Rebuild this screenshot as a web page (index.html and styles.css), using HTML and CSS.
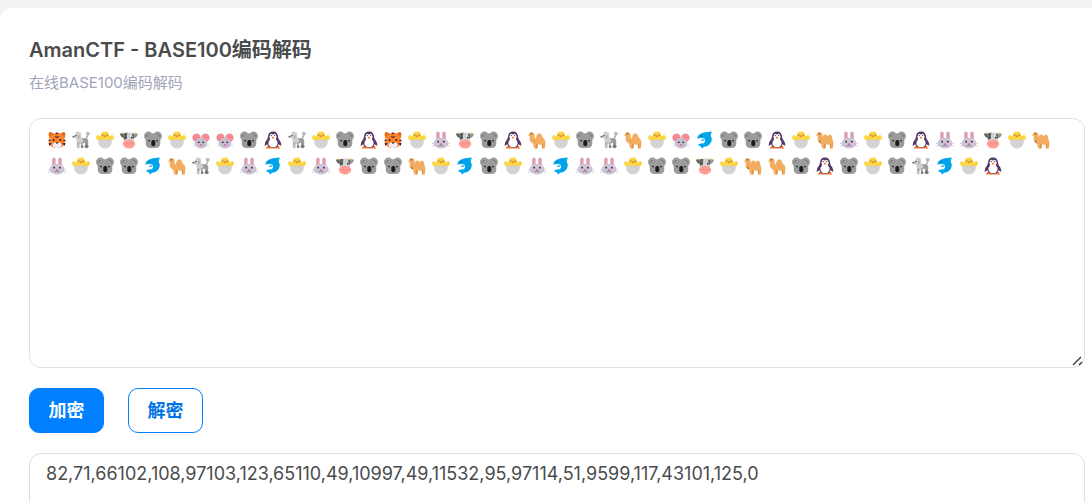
FILE: index.html
```html
<!DOCTYPE html>
<html lang="zh-CN">
<head>
  <meta charset="UTF-8" />
  <title>AmanCTF - BASE100编码解码</title>
  <link rel="stylesheet" href="styles.css">
</head>
<body>

<svg class="sprites" aria-hidden="true">
  <symbol id="tiger" viewBox="0 0 32 32">
    <path fill="#e56b16" d="M1 5q0-4 5-3l6 4-8 9Q1 10 1 5zM31 5q0-4-5-3l-6 4 8 9q3-5 3-10z"/>
    <path fill="#ff822d" d="M16 3c9 0 13 7 14 15 0 8-5 12-14 12S2 26 2 18C3 10 7 3 16 3z"/>
    <path fill="#f4eaf8" d="M16 20q5-1 8 3 1 7-8 7t-8-7q3-4 8-3z"/>
    <path fill="#321b41" d="M13 3h6l-3 3zM12 9l4 1 4-1-2 3h-4zM1 15l5 2-5 1zM31 15l-5 2 5 1zM1 21l6 1-5 4zM31 21l-6 1 5 4z"/>
    <circle cx="10" cy="16" r="1.6" fill="#1c1c1c"/>
    <circle cx="22" cy="16" r="1.6" fill="#1c1c1c"/>
    <path fill="#1c1c1c" d="M13 20h6l-3 3z"/>
  </symbol>
  <symbol id="poodle" viewBox="0 0 32 32">
    <path fill="none" stroke="#9b9b9b" stroke-width="2" d="M25 15l3-8"/>
    <circle cx="28" cy="5" r="3.5" fill="#bdbdbd"/>
    <path fill="#9b9b9b" d="M14 13h12q4 3 3 8l-1 5h-4l-1-5-8 2z"/>
    <path fill="#b4b4b4" d="M1 9l7-3 5 3-3 4-8-1z"/>
    <path fill="#cfcfcf" d="M6 5q1-5 5-4 5 0 5 5l1 7q4 2 3 7-2 4-7 4-5-1-5-7z"/>
    <path fill="#b4b4b4" d="M10 6q5 0 4 6l-3 2z"/>
    <path fill="#a5a5a5" d="M9 21h4v7H9zM16 20h3v8h-3z"/>
    <circle cx="11" cy="28" r="3" fill="#c8c8c8"/>
    <circle cx="18" cy="28" r="2.5" fill="#858585"/>
    <circle cx="26" cy="27" r="3.5" fill="#7b7b7b"/>
    <circle cx="7" cy="8" r="1" fill="#1c1c1c"/>
    <circle cx="2" cy="10" r="1" fill="#1c1c1c"/>
  </symbol>
  <symbol id="chick" viewBox="0 0 32 32">
    <path fill="#fcd53f" d="M8 9q1-8 8-8t8 8q2 1 4-2 3 0 4 4-1 6-8 7H8q-7-1-8-7 1-4 4-4 2 3 4 2z"/>
    <path fill="#d3d3d3" d="M4 16l4-2 4 3 4-3 4 3 4-3 4 2q1 7-3 11-4 4-9 4t-9-4q-4-4-3-11z"/>
    <circle cx="12" cy="7" r="1" fill="#321b41"/>
    <circle cx="20" cy="7" r="1" fill="#321b41"/>
    <path fill="#f8782a" d="M13 9q3-3 6 0l-3 2z"/>
  </symbol>
  <symbol id="cow" viewBox="0 0 32 32">
    <path fill="#636363" d="M0 5q4-2 9 1l-1 7Q1 12 0 5z"/>
    <path fill="#9b9b9b" d="M32 5q-4-2-9 1l1 7q7-1 8-8z"/>
    <path fill="#f9c23c" d="M4 1q1 4 7 3l-1 4Q4 7 4 1zM28 1q-1 4-7 3l1 4q6-1 6-7z"/>
    <path fill="#d3d3d3" d="M7 4q9-3 18 0 1 8-1 16H8Q6 12 7 4z"/>
    <path fill="#636363" d="M7 4q4-1 6-1 0 6-2 9-1 4-4 4-1-5 0-12zM22 4l3 1q1 5 0 9-4-2-3-10z"/>
    <path fill="#ff9c94" d="M9 17q7-3 14 0 5 3 4 7-3 7-11 7T5 24q-1-4 4-7z"/>
    <circle cx="11" cy="12" r="1.5" fill="#1c1c1c"/>
    <circle cx="21" cy="12" r="1.5" fill="#1c1c1c"/>
    <circle cx="12" cy="22" r="1" fill="#e8686c"/>
    <circle cx="20" cy="22" r="1" fill="#e8686c"/>
  </symbol>
  <symbol id="koala" viewBox="0 0 32 32">
    <circle cx="8" cy="9" r="8" fill="#9b9b9b"/>
    <circle cx="24" cy="9" r="8" fill="#9b9b9b"/>
    <circle cx="7" cy="9" r="4" fill="#858585"/>
    <circle cx="25" cy="9" r="4" fill="#858585"/>
    <path fill="#9b9b9b" d="M16 4q11 0 13 12v7q-1 7-8 7H11q-7 0-8-7v-7Q5 4 16 4z"/>
    <circle cx="9" cy="17" r="1.5" fill="#1c1c1c"/>
    <circle cx="23" cy="17" r="1.5" fill="#1c1c1c"/>
    <rect x="13" y="16" width="7" height="11" rx="3" fill="#1c1c1c"/>
  </symbol>
  <symbol id="mouse" viewBox="0 0 32 32">
    <circle cx="8" cy="12" r="7.5" fill="#cdb0c0"/>
    <circle cx="24" cy="12" r="7.5" fill="#cdb0c0"/>
    <circle cx="8" cy="12" r="6.5" fill="#ff8790"/>
    <circle cx="24" cy="12" r="6.5" fill="#ff8790"/>
    <path fill="#c5bdcf" d="M16 12q9 0 11 9-2 10-11 10T5 21q2-9 11-9z"/>
    <circle cx="12" cy="20" r="1.5" fill="#1c1c1c"/>
    <circle cx="20" cy="20" r="1.5" fill="#1c1c1c"/>
    <path fill="#e0408d" d="M14 24h4l-2 3z"/>
    <path fill="none" stroke="#c5bdcf" d="M2 23l7 1M2 27l7-1M30 23l-7 1M30 27l-7-1"/>
  </symbol>
  <symbol id="penguin" viewBox="0 0 32 32">
    <path fill="#f8782a" d="M6 26h20l3 5H3z"/>
    <path fill="#533566" d="M16 1q8 0 9 9l1 4q5 5 5 12-3 0-5-3-1 6-10 7-9-1-10-7-2 3-5 3 0-7 5-12l1-4q1-9 9-9z"/>
    <path fill="#fff" d="M11 6q3-3 5 1 2-4 5-1 3 4 0 8 4 5 3 9-2 6-8 6t-8-6q-1-4 3-9-3-4 0-8z"/>
    <circle cx="13" cy="8" r="1" fill="#1c1c1c"/>
    <circle cx="19" cy="8" r="1" fill="#1c1c1c"/>
    <path fill="#f8782a" d="M13 10h6l-3 4z"/>
  </symbol>
  <symbol id="rabbit" viewBox="0 0 32 32">
    <rect x="7" y="1" width="7" height="18" rx="3" fill="#cdc4d6"/>
    <rect x="18" y="1" width="7" height="18" rx="3" fill="#cdc4d6"/>
    <rect x="9" y="2" width="3" height="12" rx="1" fill="#ff8790"/>
    <rect x="20" y="2" width="3" height="12" rx="1" fill="#ff8790"/>
    <path fill="#cdc4d6" d="M16 12q11 0 13 9-1 10-13 10T3 21q2-9 13-9z"/>
    <circle cx="11" cy="19" r="1.5" fill="#1c1c1c"/>
    <circle cx="21" cy="19" r="1.5" fill="#1c1c1c"/>
    <path fill="#e0408d" d="M14 22h4l-2 3z"/>
    <path fill="none" stroke="#533566" d="M12 26q3 1 4-2 1 3 4 2"/>
    <path fill="none" stroke="#b4abc0" d="M0 22l5 1M0 27l6-2M32 22l-5 1M32 27l-6-2"/>
  </symbol>
  <symbol id="dolphin" viewBox="0 0 32 32">
    <path fill="#00a6ed" d="M4 8q4-5 12-6l12-1q-1 4-2 7 5 9-2 16-4 4-10 4l-3 3-3-4-5-2q5-4 10-3 4-2 3-7-3 3-7 3l2-4q-4-1-8 0-1-3 1-6z"/>
    <path fill="#d9f1fc" d="M4 13q6-2 10 0l3 2-5 0q-4-1-8-1z"/>
    <circle cx="10" cy="9" r="1" fill="#1c1c1c"/>
  </symbol>
  <symbol id="camel-one" viewBox="0 0 32 32">
    <path fill="#f3ad61" d="M1 7q1-6 7-5 4 1 4 6v5h2q1-8 6-9 5 1 6 8 5 2 5 9l-1 10h-5l-1-7h-6l-1 7h-6l-2-9q-6-2-6-8V9H1z"/>
    <path fill="#dd984f" d="M14 23h3l-1 8h-2zM25 23h2v8h-2z"/>
    <circle cx="6" cy="5" r="1" fill="#1c1c1c"/>
  </symbol>
  <symbol id="camel-two" viewBox="0 0 32 32">
    <path fill="#f3ad61" d="M1 7q1-6 7-5 4 1 4 6v4q1-6 5-6 3 0 4 4 1-4 4-4 4 1 4 8 2 3 2 8l-1 9h-5l-1-7h-6l-1 7h-6l-2-9q-6-2-6-8V9H1z"/>
    <path fill="#b97335" d="M4 16l4 2 1 4-3-1z"/>
    <path fill="#dd984f" d="M14 23h3l-1 8h-2zM25 23h2v8h-2z"/>
    <circle cx="6" cy="5" r="1" fill="#1c1c1c"/>
  </symbol>
</svg>

<main class="card">
  <h1 class="card-title">AmanCTF - BASE100编码解码</h1>
  <p class="card-desc">在线BASE100编码解码</p>

  <div class="source-wrap">
    <textarea id="source" class="box source" aria-label="编码内容" spellcheck="false">🐯🐩🐣🐮🐨🐣🐭🐭🐨🐧🐩🐣🐨🐧🐯🐣🐰🐮🐨🐧🐪🐣🐨🐩🐪🐣🐭🐬🐨🐨🐧🐣🐫🐰🐣🐨🐧🐰🐰🐮🐣🐫🐰🐣🐨🐨🐬🐪🐩🐣🐰🐬🐣🐰🐮🐨🐨🐫🐣🐬🐨🐣🐰🐬🐰🐰🐣🐨🐨🐮🐣🐫🐪🐨🐧🐨🐣🐨🐩🐬🐣🐧</textarea>
    <div id="animals" class="animals" aria-hidden="true"></div>
  </div>

  <div class="actions">
    <button type="button" class="btn btn-primary" id="encode">加密</button>
    <button type="button" class="btn btn-outline" id="decode">解密</button>
  </div>

  <textarea id="result" class="box" aria-label="结果" spellcheck="false">82,71,66102,108,97103,123,65110,49,10997,49,11532,95,97114,51,9599,117,43101,125,0</textarea>
</main>

<script src="script.js"></script>
</body>
</html>
```

FILE: styles.css
```css
* {
  box-sizing: border-box;
}
body {
  margin: 0;
  padding-top: 8px;
  background: #f2f3f5;
  color: #4a4b4d;
  font-family: Inter, "Noto Sans CJK SC", sans-serif;
}
.sprites {
  display: none;
}
.card {
  padding: 28px 7px 28px 29px;
  background: #fff;
  border-radius: 12px 0 0 0;
}
.card-title {
  margin: 0;
  font-size: 20px;
  line-height: 28px;
  font-weight: 600;
}
.card-desc {
  margin: 8px 0 24px;
  font-size: 15px;
  line-height: 22px;
  color: #a1a5b7;
}
.box {
  display: block;
  width: 100%;
  height: 250px;
  padding: 7px 16px;
  border: 1px solid #dee0e2;
  border-radius: 12px;
  background: #fff;
  color: #4a4b4d;
  font: 18px/26px Inter, "Noto Sans CJK SC", sans-serif;
}
.box::-webkit-resizer {
  background: url("data:image/svg+xml,%3Csvg xmlns='http://www.w3.org/2000/svg' width='15' height='15'%3E%3Cpath d='M4 13l8-8M10 13l3-3' stroke='%23444' stroke-width='1.5'/%3E%3C/svg%3E") no-repeat;
}

/* animals drawn over the textarea */
.source-wrap {
  position: relative;
}
.source.drawn {
  color: transparent;
  caret-color: #4a4b4d;
  font-size: 19px;
}
.animals {
  position: absolute;
  inset: 0;
  padding: 9px 16px;
  display: flex;
  flex-wrap: wrap;
  align-content: flex-start;
  overflow: hidden;
  pointer-events: none;
}
.animal {
  width: 18px;
  height: 18px;
  margin: 4px 3px;
}

.actions {
  display: flex;
  gap: 24px;
  margin: 20px 0;
}
.btn {
  min-width: 75px;
  height: 45px;
  padding: 0 18px;
  border: 1px solid #0080ff;
  border-radius: 10px;
  font: bold 18px/26px Inter, "Noto Sans CJK SC", sans-serif;
  cursor: pointer;
}
.btn-primary {
  background: #0080ff;
  color: #fff;
}
.btn-outline {
  background: #fff;
  color: #0073e6;
}
```

FILE: script.js
```js
const OFFSET = 0x1f3f7;
const ANIMALS = {
  "🐣": "chick",
  "🐧": "penguin",
  "🐨": "koala",
  "🐩": "poodle",
  "🐪": "camel-one",
  "🐫": "camel-two",
  "🐬": "dolphin",
  "🐭": "mouse",
  "🐮": "cow",
  "🐯": "tiger",
  "🐰": "rabbit"
};

const source = document.getElementById("source");
const result = document.getElementById("result");
const animals = document.getElementById("animals");

// plain text, or any emoji without a drawing, stays as typed
function drawAnimals() {
  const chars = [...source.value];
  const known = chars.length > 0 && chars.every(c => ANIMALS[c]);
  source.classList.toggle("drawn", known);
  animals.innerHTML = known
    ? chars.map(c => `<svg class="animal"><use href="#${ANIMALS[c]}"/></svg>`).join("")
    : "";
}

function encode() {
  const bytes = new TextEncoder().encode(source.value);
  result.value = [...bytes].map(b => String.fromCodePoint(b + OFFSET)).join("");
}

function decode() {
  const bytes = [...source.value].map(c => c.codePointAt(0) - OFFSET);
  result.value = new TextDecoder().decode(new Uint8Array(bytes));
}

source.addEventListener("input", drawAnimals);
source.addEventListener("scroll", () => { animals.scrollTop = source.scrollTop; });
document.getElementById("encode").addEventListener("click", encode);
document.getElementById("decode").addEventListener("click", decode);
drawAnimals();
```
